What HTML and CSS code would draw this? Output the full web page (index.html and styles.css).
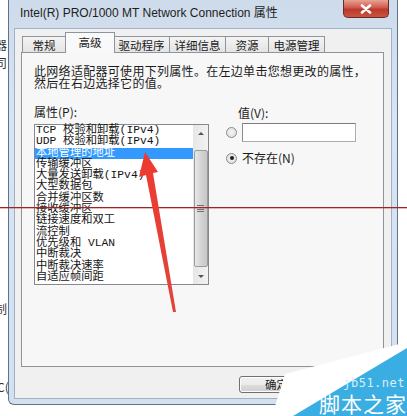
FILE: index.html
```html
<!DOCTYPE html>
<html lang="zh-CN">
<head>
<meta charset="utf-8">
<title>属性</title>
<link rel="stylesheet" href="styles.css">
</head>
<body>
<div class="desk">
  <div class="behind">
    <span class="bg-char c1">器</span>
    <span class="bg-char c2">司</span>
    <span class="bg-char c3">制</span>
    <span class="bg-char c4">C(</span>
  </div>
  <div class="window">
    <div class="titlebar">
      <span class="title">Intel(R) PRO/1000 MT Network Connection 属性</span>
      <span class="close">
        <svg width="14" height="10" viewBox="0 0 14 10"><path d="M3 1.5 L11 8.5 M11 1.5 L3 8.5" stroke="#fff" stroke-width="2.6" stroke-linecap="round"/></svg>
      </span>
    </div>
    <div class="client">
      <div class="tabs">
        <span class="tab w2">常规</span>
        <span class="tab sel">高级</span>
        <span class="tab w4">驱动程序</span>
        <span class="tab w4b">详细信息</span>
        <span class="tab w2">资源</span>
        <span class="tab w4">电源管理</span>
      </div>
      <div class="panel">
        <p class="intro">此网络适配器可使用下列属性。在左边单击您想更改的属性，<br>然后在右边选择它的值。</p>
        <div class="cols">
          <div class="left">
            <div class="label">属性(P):</div>
            <div class="listbox">
              <ul class="items">
                <li>TCP 校验和卸载(IPv4)</li>
                <li>UDP 校验和卸载(IPv4)</li>
                <li class="selected">本地管理的地址</li>
                <li>传输缓冲区</li>
                <li>大量发送卸载(IPv4)</li>
                <li>大型数据包</li>
                <li>合并缓冲区数</li>
                <li>接收缓冲区</li>
                <li>链接速度和双工</li>
                <li>流控制</li>
                <li>优先级和 VLAN</li>
                <li>中断裁决</li>
                <li>中断裁决速率</li>
                <li>自适应帧间距</li>
              </ul>
              <div class="scrollbar">
                <span class="arrow up"></span>
                <span class="thumb"><span class="grip"></span></span>
                <span class="arrow down"></span>
              </div>
            </div>
          </div>
          <div class="right">
            <div class="label vlabel">值(V):</div>
            <div class="radio-row">
              <span class="radio"></span>
              <span class="textbox"></span>
            </div>
            <div class="radio-row second">
              <span class="radio on"></span>
              <span class="rtext">不存在(N)</span>
            </div>
          </div>
        </div>
      </div>
      <div class="buttons">
        <span class="btn">确定</span>
      </div>
    </div>
  </div>
  <div class="hline"></div>
  <svg class="arrow-mark" width="407" height="416" viewBox="0 0 407 416">
    <defs>
      <linearGradient id="ar" x1="0" y1="0" x2="0" y2="1">
        <stop offset="0" stop-color="#ee3a30"/>
        <stop offset="1" stop-color="#e0443c"/>
      </linearGradient>
    </defs>
    <polygon points="145,152 158,172 153,173 176,312 173,312 146,175 139,177" fill="url(#ar)"/>
  </svg>
  <div class="watermark">
    <svg class="wm-shape" width="140" height="80" viewBox="0 0 140 80">
      <polygon points="5,80 18,38 140,6 140,80" fill="#ffffff"/>
      <polygon points="26,80 140,12 140,80" fill="#3aaee2"/>
    </svg>
    <span class="wm-site">jb51.net</span>
    <span class="wm-name">脚本之家</span>
  </div>
</div>
</body>
</html>
```
FILE: styles.css
```css
* { box-sizing: border-box; margin: 0; padding: 0; }
html, body { width: 407px; height: 416px; overflow: hidden; background: #ffffff; }
body { font-family: "Noto Sans CJK SC", "Noto Sans", sans-serif; color: #1b1b1b; }

.desk { position: relative; width: 407px; height: 416px; display: flex; align-items: flex-start; }

.behind { width: 8px; height: 416px; overflow: hidden; display: flex; flex-direction: column; font-size: 12px; line-height: 12px; color: #333; }
.bg-char { display: block; margin-left: -5px; white-space: nowrap; }
.c1 { margin-top: 39px; }
.c2 { margin-top: 6px; }
.c3 { margin-top: 234px; }
.c4 { margin-top: 66px; margin-left: -3px; }

.window {
  width: 390px; height: 405px;
  border: 1px solid #5b7390; border-top: none;
  border-radius: 0 0 6px 6px;
  background: linear-gradient(#cedbea, #d9e4f1 30%, #d4e0ee);
  padding: 0 5px 5px 5px;
  display: flex; flex-direction: column;
}
.titlebar { height: 28px; display: flex; align-items: flex-start; padding-left: 6px; }
.title { font-family: "Liberation Sans", "Noto Sans CJK SC", sans-serif; font-size: 12px; line-height: 14px; margin-top: 6px; color: #1e1e1e; }
.close {
  margin-left: auto; margin-right: 3px;
  width: 46px; height: 18px;
  border: 1px solid #6a2a2a; border-top: none;
  border-radius: 0 0 5px 5px;
  background: linear-gradient(#e8a393, #d0594a 45%, #bb3a2c 55%, #c9543f);
  display: flex; align-items: center; justify-content: center;
}
.close svg { display: block; }

.client {
  flex: 1;
  background: #f0f0f0;
  border: 1px solid #9fb1c5;
  display: flex; flex-direction: column;
}

.tabs { height: 24px; display: flex; align-items: flex-end; padding: 3px 0 0 7px; position: relative; z-index: 1; margin-bottom: -1px; }
.tab {
  height: 16px; margin-bottom: 1px; margin-left: -1px;
  border: 1px solid #8e939c; border-bottom: none;
  background: linear-gradient(#f4f4f4, #e4e4e4);
  font-size: 11.5px; line-height: 14px;
  display: flex; justify-content: center; align-items: center;
  color: #1b1b1b;
}
.tabs .tab:first-child { margin-left: 0; }
.w2 { width: 44px; }
.w4 { width: 57px; }
.w4b { width: 57px; }
.tab.sel {
  width: 50px; height: 21px; margin-bottom: 0;
  background: #f9f9f9;
  align-items: flex-start; padding-top: 2px;
  margin-left: -1px; margin-right: -1px;
  position: relative; z-index: 2;
}

.panel {
  margin-left: 6px; width: 363px; height: 315px;
  border: 1px solid #8e939c;
  background: #f7f7f7;
  padding: 12px 0 0 12px;
}
.intro { font-size: 12px; line-height: 12px; letter-spacing: 0.3px; }

.cols { display: flex; margin-top: 17px; }
.left { width: 175px; display: flex; flex-direction: column; }
.label { font-size: 12px; line-height: 12px; }
.listbox {
  margin-top: 6px; height: 161px;
  border: 1px solid #848991;
  background: #ffffff;
  display: flex;
}
.items { list-style: none; width: 158px; padding-top: 0; font-family: "Liberation Mono", "Noto Sans CJK SC", monospace; font-size: 11.3px; line-height: 11.3px; }
.items li { padding-left: 1px; white-space: nowrap; height: 11.3px; color: #141414; }
.items li.selected { background: #3399ff; color: #ffffff; }

.scrollbar { width: 15px; display: flex; flex-direction: column; align-items: center; background: linear-gradient(90deg, #e6e6e6, #f2f2f2); }
.arrow { width: 15px; height: 16px; display: flex; justify-content: center; align-items: center; }
.arrow::before { content: ""; width: 0; height: 0; border-left: 3px solid transparent; border-right: 3px solid transparent; }
.arrow.up::before { border-bottom: 3px solid #555; }
.arrow.down::before { border-top: 3px solid #555; }
.up { margin-bottom: 9px; }
.thumb {
  width: 14px; height: 117px;
  border: 1px solid #9b9b9b; border-radius: 2px;
  background: linear-gradient(90deg, #e8e8e8, #d4d4d4 50%, #c6c6c6);
  display: flex; align-items: center; justify-content: center;
}
.grip { width: 7px; height: 7px; background: repeating-linear-gradient(#6f6f6f 0 1px, transparent 1px 2px); }
.down { margin-top: auto; }

.right { margin-left: 17px; display: flex; flex-direction: column; }
.vlabel { padding-left: 12px; margin-top: 1px; }
.radio-row { display: flex; align-items: center; margin-top: 4px; }
.radio {
  width: 11px; height: 11px; border-radius: 50%;
  border: 1px solid #8a8a8a;
  background: radial-gradient(#f4f4f4, #dcdcdc);
  display: flex; align-items: center; justify-content: center;
}
.radio.on::after { content: ""; width: 4px; height: 4px; border-radius: 50%; background: #1e1e1e; }
.textbox { margin-left: 5px; width: 114px; height: 19px; background: #ffffff; border: 1px solid #abadb3; border-top-color: #7a7c80; border-left-color: #8a8c90; }
.second { margin-top: 10px; }
.rtext { margin-left: 5px; font-size: 12px; line-height: 12px; }

.buttons { display: flex; padding-left: 224px; margin-top: 9px; }
.btn {
  width: 75px; height: 17px;
  border: 1px solid #707070; border-radius: 3px;
  background: linear-gradient(#f2f2f2, #ebebeb 50%, #dddddd 51%, #cfcfcf);
  box-shadow: inset 0 0 0 1px #fcfcfc;
  font-size: 11.5px; line-height: 15px; text-align: center;
}

.hline { position: absolute; left: 0; top: 207px; width: 407px; height: 1px; background: #9c2626; box-shadow: 0 1px 0 rgba(180, 60, 60, 0.35); z-index: 5; }
.arrow-mark { position: absolute; left: 0; top: 0; z-index: 6; pointer-events: none; }

.watermark { position: absolute; right: 0; bottom: 0; width: 140px; height: 80px; z-index: 7; }
.wm-shape { position: absolute; left: 0; top: 0; display: block; }
.wm-site { position: absolute; right: 2px; top: 41px; font-family: "DejaVu Sans Mono", monospace; font-size: 12px; line-height: 12px; color: #d7eefa; letter-spacing: 0.5px; }
.wm-name { position: absolute; right: 0; top: 55px; font-size: 21px; line-height: 24px; color: #ffffff; letter-spacing: 1px; }
```
